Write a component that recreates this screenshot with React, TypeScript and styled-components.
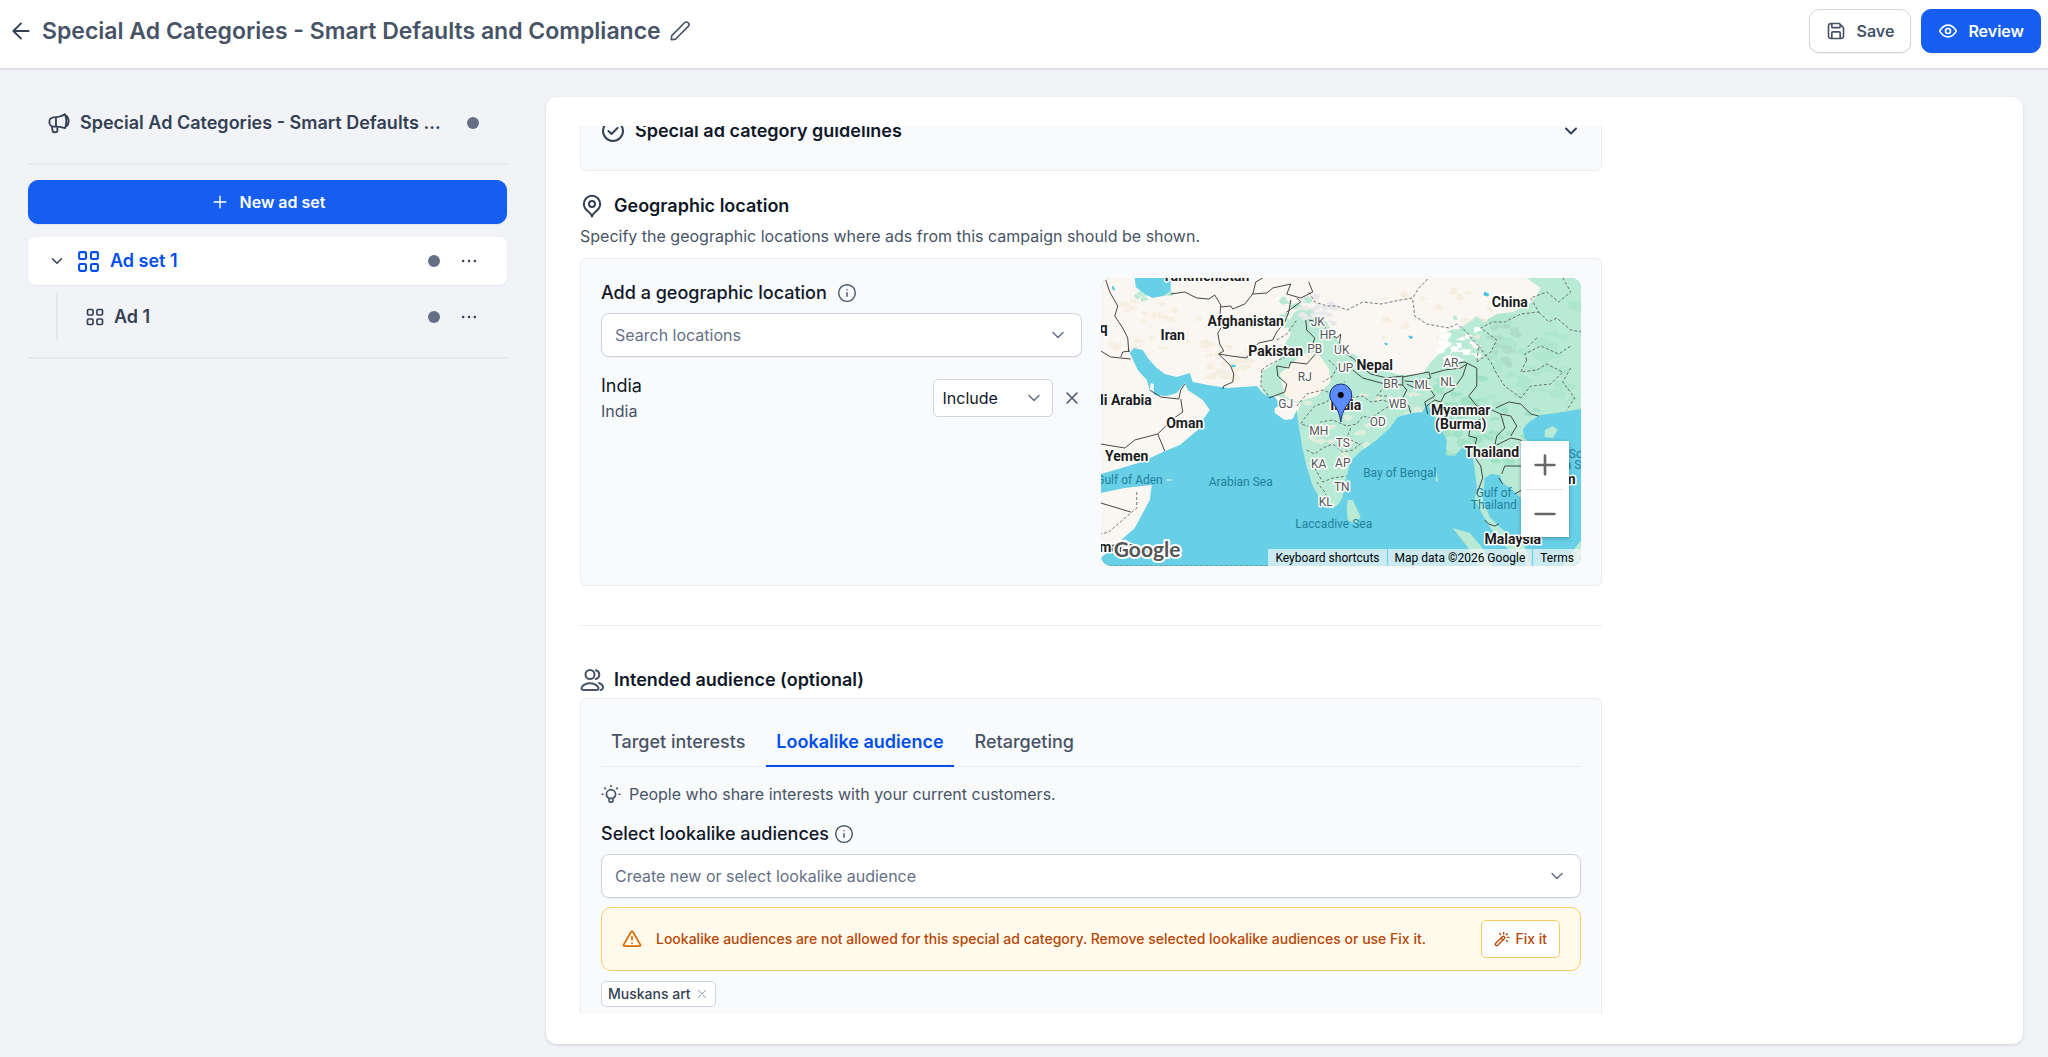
import React, { useLayoutEffect, useRef } from "react";
import styled, { createGlobalStyle, css } from "styled-components";

const color = {
  brand: "#155eef",
  brandDark: "#004eeb",
  ink: "#101828",
  slate: "#344054",
  body: "#475467",
  muted: "#667085",
  line: "#eaecf0",
  field: "#d0d5dd",
  page: "#f2f3f7",
  panel: "#f9fafc",
  warn: "#b54708",
  warnLine: "#f7cb62",
};

const GlobalStyle = createGlobalStyle`
  *, *::before, *::after { box-sizing: border-box; }
  body {
    margin: 0;
    background: ${color.page};
    color: ${color.ink};
    font-family: Inter, "Liberation Sans", sans-serif;
    font-size: 16px;
    line-height: 24px;
    -webkit-font-smoothing: antialiased;
  }
  button, input, select { font: inherit; color: inherit; margin: 0; }
  button { cursor: pointer; padding: 0; border: 0; background: none; }
  h1, h2, h3, p { margin: 0; }
`;

/* ---------- icons ---------- */

const icons = {
  back: "M19 12H5M5 12L12 19M5 12L12 5",
  pencil:
    "M2.876 18.116C2.922 17.702 2.945 17.495 3.007 17.302C3.063 17.131 3.141 16.968 3.241 16.817C3.352 16.648 3.5 16.5 3.794 16.206L17 3C18.105 1.895 19.895 1.895 21 3C22.105 4.105 22.105 5.895 21 7L7.794 20.206C7.5 20.5 7.352 20.648 7.183 20.759C7.032 20.859 6.869 20.937 6.698 20.993C6.505 21.055 6.298 21.078 5.884 21.124L2.5 21.5L2.876 18.116Z",
  save:
    "M7 3V6.4C7 6.96 7 7.24 7.109 7.454C7.205 7.642 7.358 7.795 7.546 7.891C7.76 8 8.04 8 8.6 8H15.4C15.96 8 16.24 8 16.454 7.891C16.642 7.795 16.795 7.642 16.891 7.454C17 7.24 17 6.96 17 6.4V4M17 21V14.6C17 14.04 17 13.76 16.891 13.546C16.795 13.358 16.642 13.205 16.454 13.109C16.24 13 15.96 13 15.4 13H8.6C8.04 13 7.76 13 7.546 13.109C7.358 13.205 7.205 13.358 7.109 13.546C7 13.76 7 14.04 7 14.6V21M21 9.325V16.2C21 17.88 21 18.72 20.673 19.362C20.385 19.927 19.927 20.385 19.362 20.673C18.72 21 17.88 21 16.2 21H7.8C6.12 21 5.28 21 4.638 20.673C4.074 20.385 3.615 19.927 3.327 19.362C3 18.72 3 17.88 3 16.2V7.8C3 6.12 3 5.28 3.327 4.638C3.615 4.074 4.074 3.615 4.638 3.327C5.28 3 6.12 3 7.8 3H14.675C15.164 3 15.408 3 15.639 3.055C15.843 3.104 16.038 3.185 16.217 3.295C16.418 3.418 16.591 3.591 16.937 3.937L20.063 7.063C20.409 7.409 20.582 7.582 20.705 7.783C20.815 7.962 20.896 8.157 20.945 8.361C21 8.592 21 8.836 21 9.325Z",
  eye:
    "M2.42 12.713C2.284 12.497 2.216 12.39 2.178 12.223C2.149 12.098 2.149 11.902 2.178 11.777C2.216 11.611 2.284 11.503 2.42 11.288C3.546 9.505 6.895 5 12 5C17.105 5 20.455 9.505 21.58 11.287C21.717 11.503 21.785 11.611 21.823 11.777C21.851 11.902 21.851 12.099 21.823 12.223C21.785 12.39 21.717 12.497 21.58 12.713C20.455 14.495 17.105 19 12 19C6.895 19 3.546 14.495 2.42 12.713ZM12 15A3 3 0 1 0 12 9A3 3 0 0 0 12 15Z",
  megaphone:
    "M18.5 2.5C14.5 5 10.5 5.8 6.3 5.8C3.4 5.8 1.5 8 1.5 10.9C1.5 13.8 3.4 16 6.3 16C10.5 16 14.5 16.3 18.5 17.5M18.5 2.5C20.3 7 20.3 13 18.5 17.5M8.7 5.8V16M4.3 15.6L5 20.6C5.2 22.6 10 22.6 10.2 20.6V16.3M18.8 3.2C21 4.6 22.5 7.2 22.5 9.8C22.5 12.6 21.2 15 19 16.4",
  plus: "M12 5V19M5 12H19",
  minus: "M5 12H19",
  chevron: "M6 9L12 15L18 9",
  close: "M18 6L6 18M6 6L18 18",
  grid:
    "M4.2 3H8.4Q9.6 3 9.6 4.2V8.4Q9.6 9.6 8.4 9.6H4.2Q3 9.6 3 8.4V4.2Q3 3 4.2 3ZM15.6 3H19.8Q21 3 21 4.2V8.4Q21 9.6 19.8 9.6H15.6Q14.4 9.6 14.4 8.4V4.2Q14.4 3 15.6 3ZM15.6 14.4H19.8Q21 14.4 21 15.6V19.8Q21 21 19.8 21H15.6Q14.4 21 14.4 19.8V15.6Q14.4 14.4 15.6 14.4ZM4.2 14.4H8.4Q9.6 14.4 9.6 15.6V19.8Q9.6 21 8.4 21H4.2Q3 21 3 19.8V15.6Q3 14.4 4.2 14.4Z",
  more: "M5 12H5.01M12 12H12.01M19 12H19.01",
  check: "M7.5 12L10.5 15L16.5 9M22 12A10 10 0 1 1 2 12A10 10 0 0 1 22 12Z",
  pin:
    "M12 13A3 3 0 1 0 12 7A3 3 0 0 0 12 13ZM12 22.5C11.6 20.6 10.6 19.4 9 18.2C6.6 16.4 3.8 14.2 3.8 10C3.8 5.4 7.4 1.8 12 1.8C16.6 1.8 20.2 5.4 20.2 10C20.2 14.2 17.4 16.4 15 18.2C13.4 19.4 12.4 20.6 12 22.5Z",
  info: "M12 16V11.6M12 8H12.01M22 12A10 10 0 1 1 2 12A10 10 0 0 1 22 12Z",
  users:
    "M10 11A4.5 4.5 0 1 0 10 2A4.5 4.5 0 0 0 10 11ZM15.8 2.2C18.2 2.8 19.3 4.6 19.3 6.5C19.3 8.6 18 10.4 15.8 11M3.6 22C1.4 22 1 20.2 2.2 18.6C4 16.4 6.8 15.2 10 15.2C13.2 15.2 16 16.4 17.8 18.6C19 20.2 18.6 22 16.4 22ZM19 15C21.6 16 23.2 18 23 19.8C22.8 21.2 21.8 21.8 20.6 22",
  bulb:
    "M9.6 17.3V19.4C9.6 20.8 10.6 21.8 12 21.8C13.4 21.8 14.4 20.8 14.4 19.4V17.3M9.6 17.3H14.4M9.6 17.3C7.7 16.4 6.5 14.5 6.5 12.3C6.5 9.2 9 6.8 12 6.8C15 6.8 17.5 9.2 17.5 12.3C17.5 14.5 16.3 16.4 14.4 17.3M12 3V2M2.4 12.3H1.4M22.6 12.3H21.6M5.2 5.5L4.5 4.8M18.8 5.5L19.5 4.8",
  alert:
    "M12 9V13M12 17H12.01M10.615 3.892L2.391 18.098C1.935 18.886 1.707 19.28 1.741 19.603C1.77 19.885 1.918 20.142 2.147 20.308C2.41 20.5 2.865 20.5 3.775 20.5H20.225C21.135 20.5 21.59 20.5 21.853 20.308C22.082 20.142 22.23 19.885 22.259 19.603C22.293 19.28 22.065 18.886 21.609 18.098L13.385 3.892C12.93 3.107 12.703 2.715 12.407 2.583C12.148 2.468 11.852 2.468 11.593 2.583C11.297 2.715 11.07 3.107 10.615 3.892Z",
  wand:
    "M10.5 10.5L13.5 13.5M2.6 18.4L12.4 8.6Q14 7.2 15.4 8.6Q16.8 10 15.4 11.6L5.6 21.4Q4 22.8 2.6 21.4Q1.2 20 2.6 18.4ZM14.5 4.5V2M20 9.5H22.5M18.3 5.7L20 4M9.7 5.2L8.6 3.8M18.8 14.3L20 15.4",
};

const Glyph = styled.svg<{ $size: number; $tone?: string }>`
  flex: none;
  display: block;
  width: ${(p) => p.$size}px;
  height: ${(p) => p.$size}px;
  color: ${(p) => p.$tone ?? "inherit"};
  fill: none;
  stroke: currentColor;
  stroke-linecap: round;
  stroke-linejoin: round;
`;

type IconProps = { name: keyof typeof icons; size?: number; weight?: number; tone?: string };

const Icon = ({ name, size = 20, weight = 2, tone }: IconProps) => (
  <Glyph viewBox="0 0 24 24" $size={size} $tone={tone} strokeWidth={weight} aria-hidden="true">
    <path d={icons[name]} />
  </Glyph>
);

/* ---------- shell ---------- */

const Shell = styled.div`
  display: flex;
  flex-direction: column;
  height: 100vh;
`;

const TopBar = styled.header`
  display: flex;
  align-items: flex-start;
  justify-content: space-between;
  padding: 9px 7px 15px 8px;
  background: #fff;
  border-bottom: 2px solid #dcdfe8;
`;

const TitleGroup = styled.div`
  display: flex;
  align-items: center;
  gap: 8px;
  height: 44px;
  color: ${color.body};
`;

const PageTitle = styled.h1`
  font-size: 23px;
  line-height: 32px;
  font-weight: 600;
`;

const IconButton = styled.button<{ $tone?: string }>`
  flex: none;
  display: inline-flex;
  color: ${(p) => p.$tone ?? color.body};
`;

const Actions = styled.div`
  display: flex;
  gap: 10px;
`;

const Button = styled.button<{ $primary?: boolean }>`
  display: flex;
  align-items: center;
  justify-content: center;
  gap: 10px;
  height: 44px;
  padding: 0 16px;
  border: 1px solid ${color.field};
  border-radius: 10px;
  background: #fff;
  color: ${color.body};
  font-weight: 600;
  box-shadow: 0 1px 2px rgba(16, 24, 40, 0.06);
  ${(p) =>
    p.$primary &&
    css`
      border-color: ${color.brand};
      background: ${color.brand};
      color: #fff;
    `}
`;

const Workspace = styled.div`
  flex: 1;
  min-height: 0;
  display: flex;
  gap: 39px;
  padding: 27px 25px 13px 28px;
`;

/* ---------- sidebar ---------- */

const Sidebar = styled.nav`
  flex: 0 0 479px;
  min-width: 0;
  display: flex;
  flex-direction: column;
`;

const Row = styled.div<{ $active?: boolean }>`
  display: flex;
  align-items: center;
  height: 48px;
  padding: 0 28px 0 20px;
  border-radius: 8px;
  font-size: 18px;
  font-weight: 600;
  color: ${color.slate};
  ${(p) =>
    p.$active &&
    css`
      background: #fff;
      color: ${color.brandDark};
      box-shadow: 0 1px 2px rgba(16, 24, 40, 0.05);
    `}
`;

const CampaignRow = styled(Row)`
  height: 51px;
  gap: 10px;
`;

const ChildRow = styled(Row)`
  margin: 8px 0 0 28px;
  padding-left: 27px;
  border-left: 2px solid #e6e8ee;
  border-radius: 0;
`;

const RowLabel = styled.a`
  flex: 1;
  min-width: 0;
  padding-left: 9px;
  overflow: hidden;
  color: inherit;
  text-decoration: none;
  text-overflow: ellipsis;
  white-space: nowrap;
`;

const CampaignLabel = styled(RowLabel)`
  padding: 0 10px 0 0;
`;

const Twisty = styled(IconButton)`
  margin-right: 10px;
`;

const Dot = styled.span`
  flex: none;
  width: 12px;
  height: 12px;
  margin-right: 19px;
  border-radius: 50%;
  background: #667085;
`;

const EndDot = styled(Dot)`
  margin-right: 0;
`;

const Rule = styled.hr<{ $gap: number; $after?: number }>`
  width: 100%;
  height: 2px;
  margin: ${(p) => p.$gap}px 0 ${(p) => p.$after ?? 0}px;
  border: 0;
  background: #e7e9ee;
`;

const NewButton = styled(Button)`
  margin-bottom: 13px;
`;

/* ---------- main card ---------- */

const Card = styled.main`
  flex: 1;
  min-width: 0;
  display: flex;
  padding: 29px 34px 30px;
  border-radius: 10px;
  background: #fff;
  box-shadow: 0 1px 3px rgba(16, 24, 40, 0.16);
`;

const Scroller = styled.div`
  flex: 1;
  min-width: 0;
  overflow-y: auto;
  scrollbar-width: none;
`;

const Column = styled.div`
  max-width: 1022px;
  padding-bottom: 24px;
`;

const Panel = styled.section`
  padding: 19px 20px;
  border: 1px solid ${color.line};
  border-radius: 6px;
  background: ${color.panel};
`;

const Heading = styled.h2`
  display: flex;
  align-items: center;
  gap: 10px;
  height: 28px;
  margin-bottom: 4px;
  font-size: 18px;
  font-weight: 600;
`;

const GuidelinesPanel = styled(Panel)`
  margin-bottom: 21px;
`;

const GuidelinesToggle = styled.button`
  display: flex;
  align-items: center;
  gap: 10px;
  width: 100%;
  height: 41px;
  font-size: 18px;
  font-weight: 600;
  text-align: left;
`;

const Grow = styled.span`
  flex: 1;
`;

const Hint = styled.p`
  margin-bottom: 10px;
  color: ${color.body};
`;

const TwoColumns = styled.div`
  display: grid;
  grid-template-columns: 1fr 1fr;
  gap: 19px;
`;

const LabelRow = styled.div<{ $gap: number }>`
  display: flex;
  align-items: center;
  gap: ${(p) => p.$gap}px;
  height: 30px;
  margin-bottom: 5px;
  font-size: 18px;
  font-weight: 500;
`;

const Combo = styled.div`
  display: flex;
  align-items: center;
  height: 44px;
  padding-right: 13px;
  border: 1px solid ${color.field};
  border-radius: 8px;
  background: #fff;
  box-shadow: 0 1px 2px rgba(16, 24, 40, 0.06);
`;

const ComboInput = styled.input`
  flex: 1;
  min-width: 0;
  height: 100%;
  padding: 0 13px;
  border: 0;
  outline: 0;
  background: transparent;
  &::placeholder {
    color: ${color.muted};
    opacity: 1;
  }
`;

const LocationRow = styled.div`
  display: flex;
  align-items: center;
  gap: 9px;
  padding-top: 16px;
`;

const LocationText = styled.div`
  flex: 1;
`;

const LocationName = styled.p`
  font-size: 18px;
  line-height: 26px;
`;

const LocationParent = styled.p`
  color: ${color.body};
`;

const SelectBox = styled.div`
  display: grid;
  align-items: center;
  width: 120px;
  height: 38px;
  border: 1px solid ${color.field};
  border-radius: 5px;
  background: #fff;
  & > * {
    grid-area: 1 / 1;
  }
  & > svg {
    justify-self: end;
    margin-right: 8px;
    pointer-events: none;
  }
`;

const Select = styled.select`
  width: 100%;
  height: 100%;
  padding: 0 9px;
  border: 0;
  outline: 0;
  appearance: none;
  background: transparent;
`;

const SectionRule = styled.hr`
  height: 1px;
  margin: 39px 0 40px;
  border: 0;
  background: ${color.line};
`;

const Tabs = styled.div`
  display: flex;
  gap: 11px;
  border-bottom: 1px solid ${color.line};
`;

const Tab = styled.button<{ $active?: boolean }>`
  height: 49px;
  margin-bottom: -1px;
  padding: 0 10px;
  border-bottom: 2px solid ${(p) => (p.$active ? color.brandDark : "transparent")};
  color: ${(p) => (p.$active ? color.brandDark : color.body)};
  font-size: 18px;
  font-weight: ${(p) => (p.$active ? 600 : 500)};
`;

const Tip = styled.p`
  display: flex;
  align-items: center;
  gap: 8px;
  padding: 15px 0 13px;
  color: ${color.body};
`;

const Alert = styled.div`
  display: flex;
  align-items: center;
  gap: 14px;
  height: 64px;
  margin: 9px 0 10px;
  padding: 0 20px;
  border: 1px solid ${color.warnLine};
  border-radius: 10px;
  background: #fffaeb;
  color: ${color.warn};
  font-size: 14px;
  font-weight: 500;
`;

const AlertText = styled.p`
  flex: 1;
`;

const FixButton = styled.button`
  display: flex;
  align-items: center;
  gap: 5px;
  height: 38px;
  padding: 0 12px;
  border: 1px solid ${color.warnLine};
  border-radius: 5px;
  background: #fff;
  font-weight: 500;
`;

const Chip = styled.span`
  display: inline-flex;
  align-items: center;
  gap: 4px;
  height: 26px;
  padding: 0 6px;
  border: 1px solid ${color.field};
  border-radius: 5px;
  background: #fff;
  color: ${color.slate};
  font-size: 14px;
  font-weight: 500;
  vertical-align: top;
`;

/* ---------- map ---------- */

const MapFrame = styled.div`
  position: relative;
  height: 288px;
  overflow: hidden;
  border-radius: 10px;
  background: #67d0e6;
  font-family: Roboto, "Liberation Sans", sans-serif;
`;

const MapArt = styled.svg`
  display: block;
  width: 100%;
  height: 100%;
`;

const ZoomControls = styled.div`
  position: absolute;
  right: 12px;
  bottom: 29px;
  display: grid;
  width: 48px;
  padding: 0 5px;
  background: #fff;
  box-shadow: 0 1px 4px rgba(0, 0, 0, 0.3);
`;

const ZoomButton = styled.button`
  display: grid;
  place-items: center;
  height: 48px;
  color: #666;
  & + & {
    border-top: 1px solid #e6e6e6;
  }
`;

const Attribution = styled.div`
  position: absolute;
  right: 0;
  bottom: 0;
  display: flex;
  gap: 1px;
`;

const attributionItem = css`
  height: 17px;
  padding: 0 7px;
  background: rgba(245, 245, 245, 0.7);
  color: #000;
  font-size: 12px;
  line-height: 18px;
  text-decoration: none;
`;

const AttributionButton = styled.button`
  ${attributionItem}
`;
const AttributionText = styled.span`
  ${attributionItem}
`;
const AttributionLink = styled.a`
  ${attributionItem}
`;

const Place = styled.text<{ $kind: "country" | "state" | "sea" }>`
  font-family: Roboto, "Liberation Sans", sans-serif;
  paint-order: stroke;
  stroke-linejoin: round;
  ${(p) =>
    p.$kind === "country" &&
    css`
      font-size: 14px;
      font-weight: 700;
      fill: #1c1c1c;
      stroke: #fff;
      stroke-width: 3px;
    `}
  ${(p) =>
    p.$kind === "state" &&
    css`
      font-size: 12px;
      fill: #555;
      stroke: #fff;
      stroke-width: 3px;
    `}
  ${(p) =>
    p.$kind === "sea" &&
    css`
      font-size: 12px;
      fill: #23809c;
    `}
`;

const Wordmark = styled.text`
  font-family: Lato, "Liberation Sans", sans-serif;
  font-size: 21px;
  font-weight: 700;
  fill: #555;
  stroke: #fff;
  stroke-width: 4px;
  stroke-linejoin: round;
  paint-order: stroke;
`;

type Anchor = "start" | "middle" | "end";
type Spot = [string, number, number, Anchor?];

const countries: Spot[] = [
  ["Turkmenistan", 105, 3],
  ["Afghanistan", 145, 48],
  ["Iran", 72, 62],
  ["Iraq", 7, 55, "end"],
  ["Pakistan", 175, 78],
  ["Saudi Arabia", 51, 127, "end"],
  ["Oman", 84, 150],
  ["Yemen", 26, 183],
  ["Somalia", 33, 274, "end"],
  ["China", 409, 29],
  ["Nepal", 274, 92],
  ["India", 245, 132],
  ["Myanmar", 360, 137],
  ["(Burma)", 360, 151],
  ["Thailand", 391, 179],
  ["Vietnam", 475, 206, "end"],
  ["Malaysia", 412, 266],
];

const states: Spot[] = [
  ["JK", 217, 48],
  ["HP", 227, 61],
  ["PB", 214, 75],
  ["UK", 241, 76],
  ["UP", 245, 94],
  ["RJ", 204, 103],
  ["GJ", 185, 130],
  ["MH", 218, 157],
  ["TS", 242, 169],
  ["KA", 218, 190],
  ["AP", 242, 189],
  ["TN", 241, 213],
  ["KL", 225, 228],
  ["BR", 290, 110],
  ["WB", 297, 130],
  ["OD", 277, 148],
  ["ML", 322, 111],
  ["NL", 347, 108],
  ["AR", 350, 89],
];

const seas: Spot[] = [
  ["Gulf of Aden", 62, 206, "end"],
  ["Arabian Sea", 140, 208],
  ["Laccadive Sea", 233, 250],
  ["Bay of Bengal", 299, 199],
  ["Gulf of", 393, 219],
  ["Thailand", 393, 231],
  ["South", 468, 180, "start"],
  ["China Sea", 440, 191, "start"],
];

/* A small deterministic generator keeps the terrain patches stable between renders. */
const patches = (seed: number, count: number, x: number, y: number, w: number, h: number, size: number) => {
  let s = seed;
  const next = () => {
    s = (s * 16807) % 2147483647;
    return s / 2147483647;
  };
  for (let i = 0; i < 4; i++) next();
  let d = "";
  for (let i = 0; i < count; i++) {
    const cx = x + next() * w;
    const cy = y + next() * h;
    const tilt = next() * 3;
    for (let k = 0; k < 7; k++) {
      const a = tilt + (k / 7) * Math.PI * 2;
      const r = size * (0.3 + next());
      d += `${k ? "L" : "M"}${(cx + Math.cos(a) * r * 1.4).toFixed(1)} ${(cy + Math.sin(a) * r * 0.8).toFixed(1)}`;
    }
    d += "Z";
  }
  return d;
};

const dryLand =
  "M0 0H426L440 10L432 24L412 34L396 36L386 42L374 40L362 48L350 52L340 58L352 66L340 74L330 84L322 96L300 97L284 93L270 86L256 78L246 72L238 64L232 54L226 44L214 34L204 28L194 34L186 46L190 56L184 66L180 80L170 88L161 94L160 108L165 120L176 118L188 122L200 126L196 136L192 148L60 190V288H0Z";

const water = [
  "M34 0L35 9L44 16L52 20L62 18L70 13L70 0Z",
  "M29 75L33 70L42 72L47 80L56 90L64 96L76 99L89 95L92 104L107 107L127 110L156 108L164 117L174 119L180 127L174 130L174 135L184 142L192 141L196 132L198 148L202 172L207 192L212 208L221 224L231 231L238 226L242 219L243 208L246 199L248 190L251 182L259 174L276 162L289 150L297 139L311 135L322 134L326 125L334 139L339 149L346 162L345 177L354 178L361 170L367 167L372 179L374 192L376 209L374 222L381 235L389 249L397 259L406 270L420 280L426 288H0V280L17 265L34 250L49 222L51 207L24 210L0 215V196L14 192L41 184L62 174L79 167L97 152L102 142L109 132L102 122L87 112L84 105L76 115L66 118L53 117L53 106L50 105L49 112L46 102L37 92Z",
  "M384 200L390 196L399 197L402 205L412 212L422 222L436 212L442 198L440 182L434 170L424 160L422 152L427 145L439 137L456 135L481 131V288H430L422 262L406 255L399 249L389 239L382 222Z",
].join("");

const islands =
  "M247 222L252 222L260 239L254 246L247 242L246 230ZM352 250L369 255L381 269L392 288H378L366 268ZM444 152L452 148L457 152L452 160L444 159ZM474 270L481 262V288H462ZM66 201H71V203H66ZM335 196L336 194L337 203L335 204Z";

const borders =
  "M5 2L9 14L17 28L14 38L22 50L27 60L28 74M0 73L10 79L20 80L30 81M20 79L22 74L29 73M70 16L84 14L96 20L108 21L114 17L120 27L119 40L123 46L117 55L119 66L123 73L118 76L130 88L133 96L132 104L123 108L122 111M120 29L130 28L132 31L144 26L152 16L166 15L172 10L190 6L186 16L200 20L212 14L208 4M152 16L155 4L162 0M190 22L188 34L184 44L176 54L172 62L158 65L150 72L146 80L130 78L118 76M186 34L200 24L196 20M205 42L206 52L214 60L212 66L220 70L206 86L190 84L188 90L176 88L177 98L186 106L184 114L168 120M208 42L222 45L228 55L236 60L240 56L238 72L252 80L262 90L270 96L286 100L302 98L302 107L284 106L262 100L252 92M302 99L318 96L328 94L330 100L316 104L304 103M302 107L306 112L301 122L308 128L310 135M306 106L314 110L330 112L334 118L324 124L327 136M330 96L344 92L360 90L366 86L362 98L352 112L344 116L340 124L334 122L326 128M352 86L364 84L376 90L376 108L368 118L376 128L390 130L382 140L370 146L368 158L376 160L372 176L380 188L382 200L376 216M391 132L400 136L404 150L396 158L394 168L410 160L420 162L434 176L436 186M395 130L408 124L420 126L430 136L438 138M400 136L410 138L416 148L410 158M401 196L404 188L420 188L436 186M402 206L398 200M421 212L414 216M384 242L388 246L394 248L398 246M49 112L60 119L78 121L80 112L84 106M80 121L82 134L72 141L57 156M0 166L24 170L34 162L57 156L64 173M0 225L30 234";

const dashed =
  "M208 14L214 24L226 28L236 28L246 32L262 24L280 26L300 22L312 20L318 10L328 0M312 22L314 38L326 46L348 50L356 46L366 54L372 62L378 68L376 84M376 84L390 74L396 62L380 50L392 44L404 44L420 36L438 34L430 20L446 14L458 24L470 14L462 0M438 34L448 44L456 40L470 52L481 54M426 82L420 94L436 92L446 86L462 94L450 106L430 108L420 120M426 82L424 76L440 68L458 76L470 68M436 60L426 70M378 68L390 84L396 96L404 108L420 120M470 90L462 104L474 120L466 132M161 92L166 88L186 78M161 92L160 108L168 118M196 128L206 116L222 112L232 116L226 124L214 128L204 140L200 146L214 150L220 144L232 142L246 148L256 146L262 138L270 140L282 132L292 126L282 122L270 124L262 118L248 120L236 110L244 104M206 172L214 176L222 170L232 166L242 174L252 172L262 164M214 190L222 204L232 200L246 198M216 204L224 214L230 228M250 150L246 160L258 166M284 108L276 118L288 118M36 214V230L8 254L0 256M176 62L186 56L196 42M228 82L236 90L232 98L222 104M4 288H170";

const labels = (list: Spot[], kind: "country" | "state" | "sea") =>
  list.map(([name, x, y, anchor = "middle"]) => (
    <Place key={name + y} $kind={kind} x={x} y={y} textAnchor={anchor}>
      {name}
    </Place>
  ));

const LocationMap = () => (
  <MapFrame>
    <MapArt viewBox="0 0 481 288" preserveAspectRatio="xMidYMid slice" role="img" aria-label="Map centred on India">
      <rect width="481" height="288" fill="#b9ead5" />
      <path d={patches(7717, 40, 200, 115, 120, 75, 4)} fill="#f3efe0" opacity=".7" />
      <path d={patches(1523, 50, 385, 20, 96, 110, 6)} fill="#a9e3c9" opacity=".6" />
      <path d={patches(9131, 30, 335, 95, 45, 90, 6)} fill="#98e0be" opacity=".7" />
      <path d={patches(3371, 20, 388, 48, 28, 40, 4)} fill="#a9d3c4" opacity=".6" />
      <path d={patches(5843, 24, 385, 130, 50, 60, 4)} fill="#98e0be" opacity=".7" />
      <path d={dryLand} fill="#faf7f2" />
      <path d="M179 96L188 88L202 76L216 74L228 90L230 104L216 118L196 124L184 118Z" fill="#faf5ea" />
      <path d="M168 98L176 92L180 98L176 104L184 112L178 116L170 110Z" fill="#b9ead5" />
      <path d={patches(2129, 30, 0, 20, 125, 60, 4)} fill="#f3ecdc" opacity=".7" />
      <path d={patches(2911, 18, 105, 65, 48, 36, 5)} fill="#f3ecdc" opacity=".8" />
      <path d={patches(4127, 18, 270, 10, 130, 50, 4)} fill="#f3ecdc" opacity=".8" />
      <path d={patches(6311, 24, 198, 16, 38, 30, 4)} fill="#e9e8ea" />
      <path d={patches(6883, 16, 182, 20, 30, 32, 4)} fill="#b9ead5" />
      <path d={patches(8719, 22, 335, 48, 44, 34, 4)} fill="#fff" />
      <path d={patches(1259, 20, 345, 36, 45, 44, 3)} fill="#b9ead5" />
      <path d={patches(5381, 12, 34, 14, 42, 8, 3)} fill="#b9ead5" />
      <path d={water} fill="#67d0e6" />
      <path d={islands} fill="#b9ead5" />
      <path
        d="M384 14L388 16L387 18L383 17ZM308 58L312 59L310 61ZM284 65L287 66L285 67ZM131 87L135 88L132 89ZM12 8L14 12L12 11Z"
        fill="#4cc4e4"
        stroke="#4cc4e4"
      />
      <path d={dashed} fill="none" stroke="#555" strokeWidth=".8" strokeDasharray="3 2" />
      <path d={borders} fill="none" stroke="#333" strokeWidth=".9" strokeLinejoin="round" />
      {labels(seas, "sea")}
      {labels(states, "state")}
      {labels(countries, "country")}
      <Wordmark x="13" y="279">
        Google
      </Wordmark>
      <path
        d="M240 144C239 135 236 130 232 125C230 122 229 120 229 117A11 11 0 0 1 251 117C251 120 250 122 248 125C244 130 241 135 240 144Z"
        fill="#5b8cff"
        stroke="#1b2f6b"
        strokeWidth="1"
      />
      <circle cx="240" cy="117" r="3" fill="#000" />
    </MapArt>
    <ZoomControls>
      <ZoomButton aria-label="Zoom in">
        <Icon name="plus" size={32} />
      </ZoomButton>
      <ZoomButton aria-label="Zoom out">
        <Icon name="minus" size={32} />
      </ZoomButton>
    </ZoomControls>
    <Attribution>
      <AttributionButton>Keyboard shortcuts</AttributionButton>
      <AttributionText>Map data ©2026 Google</AttributionText>
      <AttributionLink href="#terms">Terms</AttributionLink>
    </Attribution>
  </MapFrame>
);

/* ---------- page ---------- */

const CAMPAIGN = "Special Ad Categories - Smart Defaults and Compliance";
const SCROLL_START = 36;

export default function App() {
  const scroller = useRef<HTMLDivElement>(null);

  useLayoutEffect(() => {
    if (scroller.current) scroller.current.scrollTop = SCROLL_START;
  }, []);

  return (
    <Shell>
      <GlobalStyle />
      <TopBar>
        <TitleGroup>
          <IconButton aria-label="Back">
            <Icon name="back" size={26} weight={1.8} tone={color.slate} />
          </IconButton>
          <PageTitle>{CAMPAIGN}</PageTitle>
          <IconButton aria-label="Rename campaign">
            <Icon name="pencil" size={22} weight={1.8} />
          </IconButton>
        </TitleGroup>
        <Actions>
          <Button>
            <Icon name="save" />
            Save
          </Button>
          <Button $primary>
            <Icon name="eye" />
            Review
          </Button>
        </Actions>
      </TopBar>

      <Workspace>
        <Sidebar aria-label="Campaign structure">
          <CampaignRow>
            <Icon name="megaphone" size={22} />
            <CampaignLabel href="#campaign">{CAMPAIGN}</CampaignLabel>
            <EndDot />
          </CampaignRow>
          <Rule $gap={15} $after={15} />
          <NewButton $primary>
            <Icon name="plus" weight={1.7} />
            New ad set
          </NewButton>
          <Row $active>
            <Twisty aria-label="Collapse ad set" $tone={color.slate}>
              <Icon name="chevron" size={18} />
            </Twisty>
            <Icon name="grid" size={25} />
            <RowLabel href="#ad-set-1">Ad set 1</RowLabel>
            <Dot />
            <IconButton aria-label="Ad set options" $tone={color.slate}>
              <Icon name="more" size={20} weight={3} />
            </IconButton>
          </Row>
          <ChildRow>
            <Icon name="grid" size={20} />
            <RowLabel href="#ad-1">Ad 1</RowLabel>
            <Dot />
            <IconButton aria-label="Ad options" $tone={color.slate}>
              <Icon name="more" size={20} weight={3} />
            </IconButton>
          </ChildRow>
          <Rule $gap={16} />
        </Sidebar>

        <Card>
          <Scroller ref={scroller}>
            <Column>
              <GuidelinesPanel>
                <GuidelinesToggle aria-expanded="false">
                  <Icon name="check" size={24} tone={color.slate} />
                  Special ad category guidelines
                  <Grow />
                  <Icon name="chevron" size={20} tone={color.slate} weight={2.4} />
                </GuidelinesToggle>
              </GuidelinesPanel>

              <Heading>
                <Icon name="pin" size={24} tone={color.slate} />
                Geographic location
              </Heading>
              <Hint>Specify the geographic locations where ads from this campaign should be shown.</Hint>
              <Panel>
                <TwoColumns>
                  <div>
                    <LabelRow $gap={10}>
                      <label htmlFor="location">Add a geographic location</label>
                      <IconButton aria-label="About locations">
                        <Icon name="info" weight={1.7} size={20} />
                      </IconButton>
                    </LabelRow>
                    <Combo>
                      <ComboInput id="location" placeholder="Search locations" />
                      <Icon name="chevron" size={20} tone={color.muted} weight={1.8} />
                    </Combo>
                    <LocationRow>
                      <LocationText>
                        <LocationName>India</LocationName>
                        <LocationParent>India</LocationParent>
                      </LocationText>
                      <SelectBox>
                        <Select aria-label="Include or exclude India" defaultValue="Include">
                          <option>Include</option>
                          <option>Exclude</option>
                        </Select>
                        <Icon name="chevron" size={20} tone={color.muted} weight={1.8} />
                      </SelectBox>
                      <IconButton aria-label="Remove India">
                        <Icon name="close" size={20} weight={1.8} />
                      </IconButton>
                    </LocationRow>
                  </div>
                  <LocationMap />
                </TwoColumns>
              </Panel>

              <SectionRule />

              <Heading>
                <Icon name="users" size={24} tone={color.body} />
                Intended audience (optional)
              </Heading>
              <Panel>
                <Tabs role="tablist">
                  <Tab role="tab">Target interests</Tab>
                  <Tab role="tab" aria-selected="true" $active>
                    Lookalike audience
                  </Tab>
                  <Tab role="tab">Retargeting</Tab>
                </Tabs>
                <Tip>
                  <Icon name="bulb" size={20} />
                  People who share interests with your current customers.
                </Tip>
                <LabelRow $gap={5}>
                  <label htmlFor="lookalike">Select lookalike audiences</label>
                  <IconButton aria-label="About lookalike audiences">
                    <Icon name="info" weight={1.7} size={20} />
                  </IconButton>
                </LabelRow>
                <Combo>
                  <ComboInput id="lookalike" placeholder="Create new or select lookalike audience" />
                  <Icon name="chevron" size={20} tone={color.muted} weight={1.8} />
                </Combo>
                <Alert role="alert">
                  <Icon name="alert" size={20} tone="#dc6803" />
                  <AlertText>
                    Lookalike audiences are not allowed for this special ad category. Remove selected lookalike audiences
                    or use Fix it.
                  </AlertText>
                  <FixButton>
                    <Icon name="wand" size={16} />
                    Fix it
                  </FixButton>
                </Alert>
                <Chip>
                  Muskans art
                  <IconButton aria-label="Remove Muskans art" $tone="#98a2b3">
                    <Icon name="close" size={14} weight={1.8} />
                  </IconButton>
                </Chip>
              </Panel>
            </Column>
          </Scroller>
        </Card>
      </Workspace>
    </Shell>
  );
}
